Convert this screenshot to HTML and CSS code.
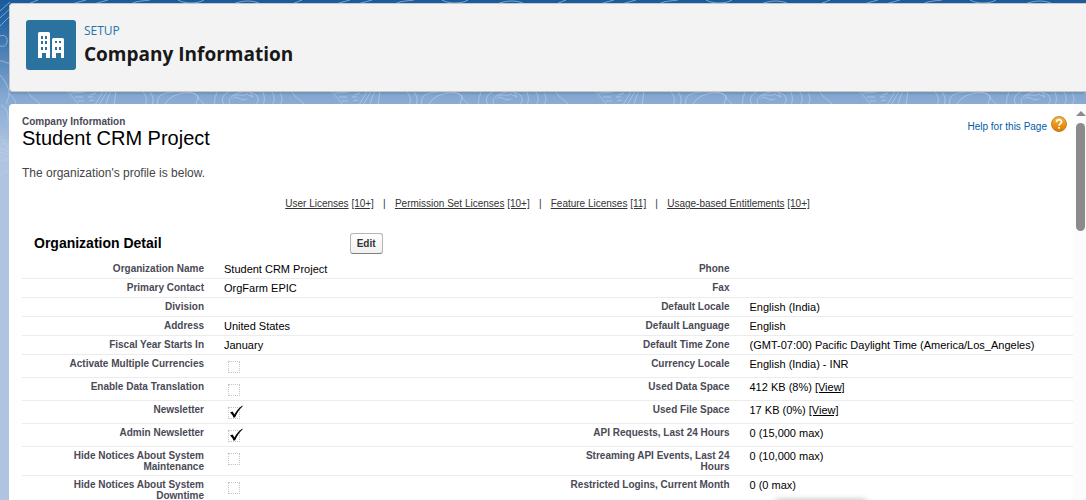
FILE: index.html
```html
<!DOCTYPE html>
<html lang="en">
<head>
<meta charset="utf-8">
<title>Company Information | Setup</title>
<link rel="stylesheet" href="styles.css">
</head>
<body>
<svg class="contours" aria-hidden="true" fill="none" stroke="#bcd4ee" stroke-opacity=".6">
  <defs>
    <pattern id="topo" width="264" height="200" patternUnits="userSpaceOnUse" x="28" y="0">
      <path d="M0 91C1 96 6 98 12 104M40 92C44 97 47 99 51 105M43 93l14-1M47 97h8M60 97h5M50 101h6M61 101l5-1M62 95l6-2M75 91C73 96 70 99 67 105M79 91C77 96 74 99 71 105M83 91C81 96 79 99 78 105M88 91 86 105M114 91C118 95 120 100 117 105M121 91C125 95 126 100 124 105M130 105C127 93 140 92 150 92S168 92 170 97 175 101 176 105M137 105C140 93 168 89 170 97 169 101 168 103 168 105M190 91C187 96 186 100 187 105M196 105C193 100 194 94 203 91M202 105C198 96 211 91 220 92 229 93 233 98 228 105M206 96C210 93 214 97 219 94L225 97 223 93M205 98C212 96 213 102 219 99M234 91C237 95 237 101 235 105M243 91C247 95 247 101 244 105M252 93C255 97 254 101 252 105"/>
      <path d="M0 4 10 0M40 5 58 0M62 5 80 0M102 5c3-4 14-4 20-5M150 0c6 4 20 4 26 0M205 4c10-4 20-4 28 0"/>
    </pattern>
  </defs>
  <path d="M0 11 10 2M0 18 15 4M0 26 12 14M0 36C5 34 8 38 7 42S4 47 0 46M0 61C4 60 6 64 9 63M0 75C6 82 9 88 9 94S5 101 7 104M1 105C6 108 9 112 8 122M9 93C14 98 16 101 16 108"/>
  <path d="M0 136 9 143M0 139 9 146M0 144h5l4 5M0 148 9 152M0 152 9 155M0 156 9 159M0 160h9M2 177C2 173 6 171 9 171"/>
  <rect x="24" width="100%" height="106" fill="url(#topo)" stroke="none"/>
</svg>
<div class="shell">
  <header class="page-header">
    <svg class="page-icon" viewBox="0 0 50 50" aria-hidden="true">
      <rect width="50" height="50" rx="3" fill="#2a739e"/>
      <path fill="#fff" fill-rule="evenodd" d="M13.500 12h9q1.500 0 1.500 1.500V38h-4v-5h-4v5h-4V13.500q0-1.500 1.500-1.500zM15 16v3h2v-3zm4 0v3h2v-3zm-4 5v3h2v-3zm4 0v3h2v-3zm-4 6v3h2v-3zm4 0v3h2v-3zM27.500 18h9q1.500 0 1.500 1.500V38h-3v-5h-5v5h-4V19.500q0-1.500 1.500-1.500zM29 21v2h2v-2zm4 0v2h2v-2zm-4 6v3h2v-3zm4 0v3h2v-3z"/>
    </svg>
    <div class="page-titles">
      <p class="eyebrow">SETUP</p>
      <h1>Company Information</h1>
    </div>
  </header>
  <main class="panel">
    <div class="content">
      <div class="title-row">
        <div>
          <p class="page-type">Company Information</p>
          <h2>Student CRM Project</h2>
        </div>
        <a class="help" href="#help"><span>Help for this Page</span>
          <svg width="16" height="16" viewBox="0 0 16 16" aria-hidden="true">
            <defs><linearGradient id="amber" x2="0" y2="1"><stop stop-color="#f9b64a"/><stop offset=".5" stop-color="#ee9616"/><stop offset="1" stop-color="#d87c04"/></linearGradient></defs>
            <circle cx="8" cy="8" r="7.500" fill="url(#amber)" stroke="#b87310" stroke-width=".8"/>
            <path d="M5.500 6.200C5.500 2.900 10.500 2.900 10.500 6 10.500 7.900 8 7.900 8 9.800M8 11.100v1.700" fill="none" stroke="#fff" stroke-width="1.700"/>
          </svg></a>
      </div>
      <p class="intro">The organization's profile is below.</p>
      <nav class="jump">
        <span><a href="#ul">User Licenses</a> <a href="#ul">[10+]</a></span><i>|</i>
        <span><a href="#psl">Permission Set Licenses</a> <a href="#psl">[10+]</a></span><i>|</i>
        <span><a href="#fl">Feature Licenses</a> <a href="#fl">[11]</a></span><i>|</i>
        <span><a href="#ube">Usage-based Entitlements</a> <a href="#ube">[10+]</a></span>
      </nav>
      <div class="detail-head">
        <h3>Organization Detail</h3>
        <button type="button">Edit</button>
      </div>
      <table class="detail">
        <colgroup><col class="c-label"><col class="c-data"><col class="c-label"><col class="c-data"></colgroup>
        <tbody>
        <tr><th scope="row">Organization Name</th><td>Student CRM Project</td><th scope="row">Phone</th><td></td></tr>
        <tr><th scope="row">Primary Contact</th><td>OrgFarm EPIC</td><th scope="row">Fax</th><td></td></tr>
        <tr><th scope="row">Division</th><td></td><th scope="row">Default Locale</th><td>English (India)</td></tr>
        <tr><th scope="row">Address</th><td>United States</td><th scope="row">Default Language</th><td>English</td></tr>
        <tr><th scope="row">Fiscal Year Starts In</th><td>January</td><th scope="row">Default Time Zone</th><td>(GMT-07:00) Pacific Daylight Time (America/Los_Angeles)</td></tr>
        <tr class="tall"><th scope="row"><label for="amc">Activate Multiple Currencies</label></th><td><span class="tick"><input type="checkbox" id="amc" disabled></span></td><th scope="row">Currency Locale</th><td>English (India) - INR</td></tr>
        <tr class="tall"><th scope="row"><label for="edt">Enable Data Translation</label></th><td><span class="tick"><input type="checkbox" id="edt" disabled></span></td><th scope="row">Used Data Space</th><td>412 KB (8%) <a href="#data">[View]</a></td></tr>
        <tr class="tall"><th scope="row"><label for="nl">Newsletter</label></th><td><span class="tick"><input type="checkbox" id="nl" checked disabled><svg viewBox="0 0 14 14" aria-hidden="true"><path d="M1 7.500 3.500 6.500 5.500 9.500Q8.500 3.500 13.500.5V1.500Q9 5.500 6 12.500H4.500Q3 9 1 7.500Z"/></svg></span></td><th scope="row">Used File Space</th><td>17 KB (0%) <a href="#files">[View]</a></td></tr>
        <tr class="tall"><th scope="row"><label for="anl">Admin Newsletter</label></th><td><span class="tick"><input type="checkbox" id="anl" checked disabled><svg viewBox="0 0 14 14" aria-hidden="true"><path d="M1 7.500 3.500 6.500 5.500 9.500Q8.500 3.500 13.500.5V1.500Q9 5.500 6 12.500H4.500Q3 9 1 7.500Z"/></svg></span></td><th scope="row">API Requests, Last 24 Hours</th><td>0 (15,000 max)</td></tr>
        <tr class="tall"><th scope="row"><label for="hm">Hide Notices About System Maintenance</label></th><td><span class="tick"><input type="checkbox" id="hm" disabled></span></td><th scope="row">Streaming API Events, Last 24 Hours</th><td>0 (10,000 max)</td></tr>
        <tr class="tall"><th scope="row"><label for="hd">Hide Notices About System Downtime</label></th><td><span class="tick"><input type="checkbox" id="hd" disabled></span></td><th scope="row">Restricted Logins, Current Month</th><td>0 (0 max)</td></tr>
        </tbody>
      </table>
    </div>
    <div class="scrollbar" aria-hidden="true"><span class="arrow"></span><span class="thumb"></span></div>
    <div class="float-shadow"></div>
  </main>
</div>
</body>
</html>
```
FILE: styles.css
```css
* { box-sizing: border-box; }
body {
  margin: 0;
  height: 100vh;
  overflow: hidden;
  background: linear-gradient(#195b9c 0, #2464a4 20px, #86a9d2 98px, #b0c4df 150px);
  font-family: "Liberation Sans", Arial, sans-serif;
  font-size: 11px;
  color: #000;
}
p, h1, h2, h3 { margin: 0; }
.contours { position: absolute; inset: 0; width: 100%; height: 100%; }
.shell {
  position: relative;
  display: flex;
  flex-direction: column;
  gap: 12px;
  height: 100%;
  padding: 3px 0 0 9px;
}
.page-header {
  display: flex;
  gap: 8px;
  padding: 16px;
  min-height: 89px;
  border: 1px solid #c9c9c9;
  border-right: 0;
  border-radius: 4px 0 0 4px;
  background: #f3f3f3;
  box-shadow: 0 2px 2px rgba(0, 0, 0, .1);
}
.page-icon { width: 50px; height: 50px; }
.page-titles { font-family: "Open Sans", "Noto Sans", sans-serif; }
.eyebrow { font-size: 12px; line-height: 22px; color: #2574a9; }
h1 { font-size: 19px; line-height: 25px; font-weight: 700; color: #181818; }
.panel {
  position: relative;
  flex: 1;
  display: flex;
  min-height: 0;
  border-radius: 4px 0 0 0;
  background: #fff;
  overflow: hidden;
}
.content { flex: 1; padding: 12px 0 0 13px; }
.title-row { display: flex; justify-content: space-between; padding-right: 6px; }
.page-type { font-size: 10px; line-height: 12px; font-weight: 700; color: #4a4a56; }
h2 { font-size: 20px; line-height: 20px; font-weight: 400; }
.help { display: flex; gap: 4px; height: 16px; color: #015ba7; text-decoration: none; font-size: 10px; line-height: 22px; }
.intro { margin-top: 14px; font-size: 12px; line-height: 22px; color: #444; }
.jump { display: flex; justify-content: center; margin: 14px 0 23px; font-size: 10px; line-height: 12px; color: #333; }
.jump a { color: #333; }
.jump i { width: 21px; text-align: center; font-style: normal; }
.detail-head { display: flex; align-items: center; gap: 4px; padding-left: 12px; margin-bottom: 6px; }
h3 { width: 30%; font-size: 14px; line-height: 21px; font-weight: 700; }
button {
  height: 21px;
  padding: 0 6px;
  border: 1px solid #b5b5b5;
  border-bottom-color: #7f7f7f;
  border-radius: 3px;
  background: linear-gradient(#fff, #f0f0f0);
  color: #333;
  font: 700 10px/19px "Liberation Sans", Arial, sans-serif;
}
.detail { width: 100%; table-layout: fixed; border-collapse: separate; border-spacing: 0; }
.c-label { width: 192px; }
th, td { height: 19px; padding: 3px 2px 2px 10px; border-bottom: 1px solid #ececec; vertical-align: top; text-align: left; line-height: 13px; }
th { padding: 3px 10px 3px 14px; text-align: right; font-size: 10px; line-height: 11px; color: #4a4a56; }
.tall th, .tall td { height: 23px; }
td a { color: #000; }
.tick { position: relative; display: block; width: 12px; height: 12px; margin: 3px 0 0 4px; }
.tick input { display: block; appearance: none; width: 12px; height: 12px; margin: 0; border: 1px dotted #c4c4c4; }
.tick svg { position: absolute; left: 1px; top: -2px; width: 14px; height: 14px; }
.scrollbar { display: flex; flex-direction: column; align-items: center; gap: 7px; width: 13px; padding: 7px 0 0 2px; background: #fcfcfc; }
.arrow { border: 5px solid transparent; border-top: 0; border-bottom-color: #8b8b8b; }
.thumb { width: 9px; height: 108px; border-radius: 5px; background: #8b8b8b; }
.float-shadow { position: absolute; left: 767px; bottom: -12px; width: 90px; height: 12px; box-shadow: 0 0 6px rgba(0, 0, 0, .3); }
```
